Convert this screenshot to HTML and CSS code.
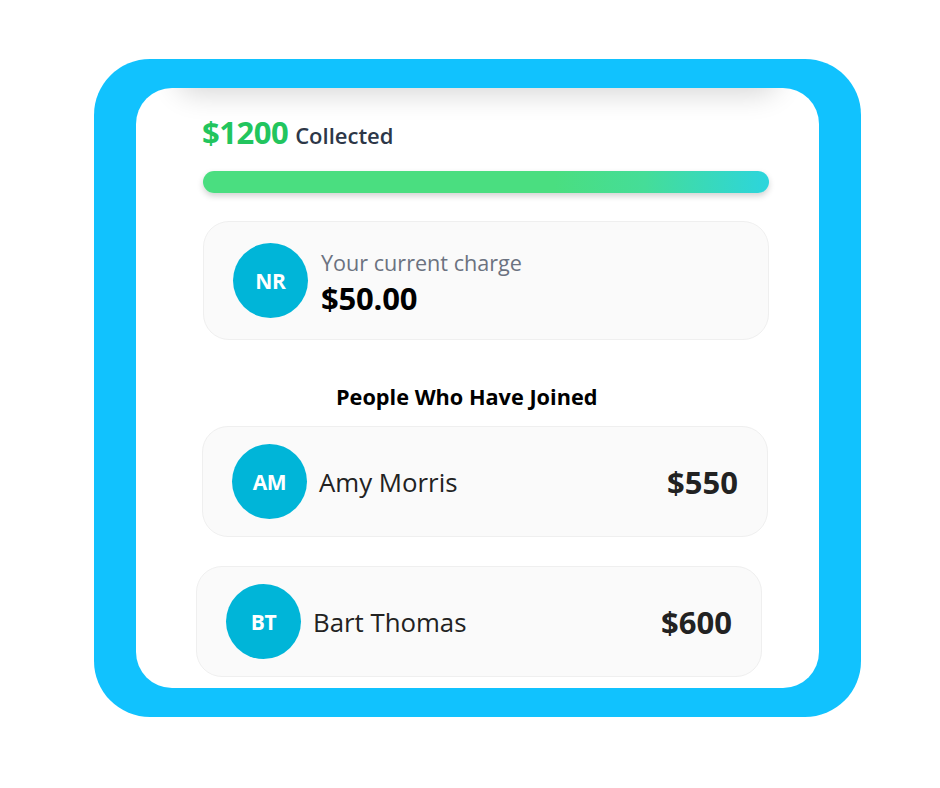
FILE: index.html
```html
<!DOCTYPE html>
<html lang="en">
<head>
<meta charset="utf-8">
<title>Collected</title>
<link rel="stylesheet" href="styles.css">
</head>
<body>
<div class="frame">
  <div class="panel">
    <div class="total"><span class="total-amount">$1200</span> <span class="total-label">Collected</span></div>
    <div class="progress"><div class="progress-fill"></div></div>
    <div class="card card-charge">
      <div class="avatar">NR</div>
      <div class="charge-text">
        <div class="charge-label">Your current charge</div>
        <div class="charge-amount">$50.00</div>
      </div>
    </div>
    <div class="section-title">People Who Have Joined</div>
    <div class="card card-person card-amy">
      <div class="avatar">AM</div>
      <div class="person-name">Amy Morris</div>
      <div class="person-amount">$550</div>
    </div>
    <div class="card card-person card-bart">
      <div class="avatar">BT</div>
      <div class="person-name">Bart Thomas</div>
      <div class="person-amount">$600</div>
    </div>
  </div>
</div>
</body>
</html>
```

FILE: styles.css
```css
html, body {
  margin: 0;
  padding: 0;
  background: #ffffff;
}
body {
  width: 940px;
  height: 788px;
  overflow: hidden;
  font-family: "Open Sans", "Noto Sans", sans-serif;
}
.frame {
  box-sizing: border-box;
  margin: 59px 0 0 94px;
  width: 767px;
  height: 658px;
  padding: 29px 42px;
  background: #11c2fe;
  border-radius: 56px;
}
.panel {
  position: relative;
  box-sizing: border-box;
  height: 100%;
  background: #ffffff;
  border-radius: 36px;
  overflow: hidden;
  padding: 26px 50px 0 66px;
}
.panel::before {
  content: "";
  position: absolute;
  left: 40px;
  right: 40px;
  top: -40px;
  height: 40px;
  border-radius: 40px;
  box-shadow: 0 6px 28px rgba(0, 0, 0, 0.16);
}
.total {
  display: flex;
  align-items: baseline;
  height: 36px;
  line-height: 36px;
  white-space: nowrap;
}
.total-amount {
  font-size: 31px;
  font-weight: 700;
  color: #22c55e;
  letter-spacing: -0.5px;
}
.total-label {
  margin-left: 7px;
  font-size: 22px;
  font-weight: 600;
  color: #2d3748;
}
.progress {
  margin: 21px 0 0 1px;
  width: 566px;
  height: 22px;
  border-radius: 11px;
  box-shadow: 0 3px 6px rgba(0, 0, 0, 0.18);
  overflow: hidden;
}
.progress-fill {
  height: 100%;
  background: linear-gradient(90deg, #4ade80 0%, #4ade80 62%, #45dd98 78%, #2cd5dd 100%);
}
.card {
  box-sizing: border-box;
  width: 566px;
  display: flex;
  align-items: center;
  background: #fafafa;
  border: 1px solid #efefef;
  border-radius: 26px;
}
.card-charge {
  margin: 28px 0 0 1px;
  height: 119px;
  padding: 0 0 0 29px;
}
.avatar {
  flex: none;
  width: 75px;
  height: 75px;
  border-radius: 50%;
  background: #00b5d8;
  color: #ffffff;
  font-size: 21px;
  font-weight: 700;
  display: flex;
  align-items: center;
  justify-content: center;
  letter-spacing: -0.3px;
}
.charge-text {
  margin-left: 13px;
  padding-top: 7px;
  display: flex;
  flex-direction: column;
}
.charge-label {
  font-size: 21.6px;
  line-height: 28px;
  color: #6b7280;
}
.charge-amount {
  font-size: 31px;
  line-height: 42px;
  font-weight: 700;
  color: #000000;
  letter-spacing: -0.2px;
}
.section-title {
  margin: 43px 0 0 134px;
  font-size: 21.7px;
  line-height: 28px;
  font-weight: 700;
  color: #000000;
}
.card-person {
  height: 111px;
  padding: 0 29px 0 29px;
}
.card-amy {
  margin-top: 15px;
  margin-left: 0;
}
.card-bart {
  margin-top: 29px;
  margin-left: -6px;
}
.person-name {
  margin-left: 12px;
  flex: 1;
  font-size: 25.8px;
  color: #222222;
}
.person-amount {
  font-size: 31px;
  font-weight: 700;
  color: #222222;
}
```
